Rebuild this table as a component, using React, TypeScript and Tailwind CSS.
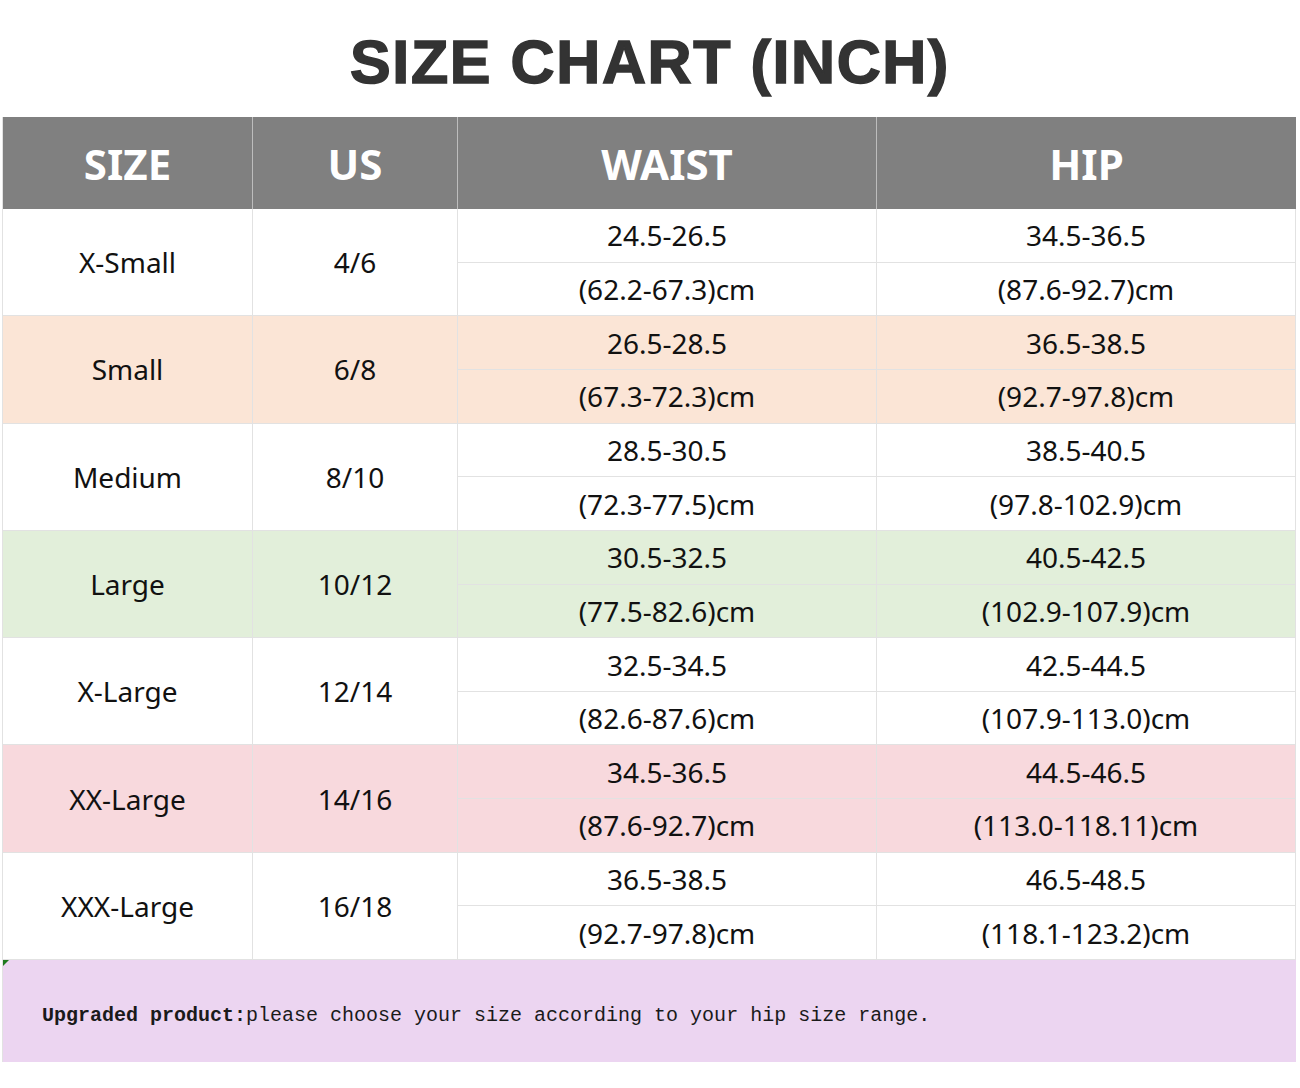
import React from 'react';

interface SizeRow {
  size: string;
  us: string;
  waist: [string, string];
  hip: [string, string];
  bg: string;
}

const rows: SizeRow[] = [
  { size: 'X-Small', us: '4/6', waist: ['24.5-26.5', '(62.2-67.3)cm'], hip: ['34.5-36.5', '(87.6-92.7)cm'], bg: 'bg-white' },
  { size: 'Small', us: '6/8', waist: ['26.5-28.5', '(67.3-72.3)cm'], hip: ['36.5-38.5', '(92.7-97.8)cm'], bg: 'bg-[#fbe5d6]' },
  { size: 'Medium', us: '8/10', waist: ['28.5-30.5', '(72.3-77.5)cm'], hip: ['38.5-40.5', '(97.8-102.9)cm'], bg: 'bg-white' },
  { size: 'Large', us: '10/12', waist: ['30.5-32.5', '(77.5-82.6)cm'], hip: ['40.5-42.5', '(102.9-107.9)cm'], bg: 'bg-[#e2efda]' },
  { size: 'X-Large', us: '12/14', waist: ['32.5-34.5', '(82.6-87.6)cm'], hip: ['42.5-44.5', '(107.9-113.0)cm'], bg: 'bg-white' },
  { size: 'XX-Large', us: '14/16', waist: ['34.5-36.5', '(87.6-92.7)cm'], hip: ['44.5-46.5', '(113.0-118.11)cm'], bg: 'bg-[#f8d9dd]' },
  { size: 'XXX-Large', us: '16/18', waist: ['36.5-38.5', '(92.7-97.8)cm'], hip: ['46.5-48.5', '(118.1-123.2)cm'], bg: 'bg-white' },
];

const cellText = "text-[28px] text-[#111] font-['Noto_Sans',sans-serif]";

const SplitCell: React.FC<{ values: [string, string]; width: string }> = ({ values, width }) => (
  <div className={`${width} flex flex-col border-r border-[#e2e2e2]`}>
    <div className={`flex-1 flex items-center justify-center border-b border-[#e2e2e2] ${cellText}`}>{values[0]}</div>
    <div className={`flex-1 flex items-center justify-center ${cellText}`}>{values[1]}</div>
  </div>
);

export default function App() {
  return (
    <div className="w-[1300px] h-[1088px] bg-white">
      <h1 className="pt-[30px] h-[117px] text-center text-[61px] leading-[64px] font-black tracking-[1.6px] text-[#333] [-webkit-text-stroke:1.5px_#333] font-['Liberation_Sans',Arial,sans-serif]">
        SIZE CHART (INCH)
      </h1>

      <div className="ml-[2px] w-[1294px] border-l border-[#e2e2e2]">
        <div className="flex h-[92px] bg-[#808080] text-white font-bold text-[42px] font-['Noto_Sans',sans-serif]">
          <div className="w-[250px] flex items-center justify-center border-r border-[#bdbdbd]">SIZE</div>
          <div className="w-[205px] flex items-center justify-center border-r border-[#bdbdbd]">US</div>
          <div className="w-[419px] flex items-center justify-center border-r border-[#bdbdbd]">WAIST</div>
          <div className="flex-1 flex items-center justify-center">HIP</div>
        </div>

        {rows.map((row, i) => (
          <div key={i} className={`flex h-[107.3px] border-b border-[#e2e2e2] ${row.bg}`}>
            <div className={`w-[250px] flex items-center justify-center border-r border-[#e2e2e2] ${cellText}`}>{row.size}</div>
            <div className={`w-[205px] flex items-center justify-center border-r border-[#e2e2e2] ${cellText}`}>{row.us}</div>
            <SplitCell values={row.waist} width="w-[419px]" />
            <SplitCell values={row.hip} width="flex-1" />
          </div>
        ))}

        <div className="relative h-[102px] bg-[#ecd5f1] flex items-center pl-[39px] pt-[10px] text-[20px] text-[#1a1a1a] font-['Liberation_Mono',monospace]">
          <div className="absolute left-0 top-0 w-0 h-0 border-t-[6px] border-r-[6px] border-t-[#1f7a1f] border-r-transparent" />
          <span className="font-bold">Upgraded product:</span>
          <span>please choose your size according to your hip size range.</span>
        </div>
      </div>
    </div>
  );
}
